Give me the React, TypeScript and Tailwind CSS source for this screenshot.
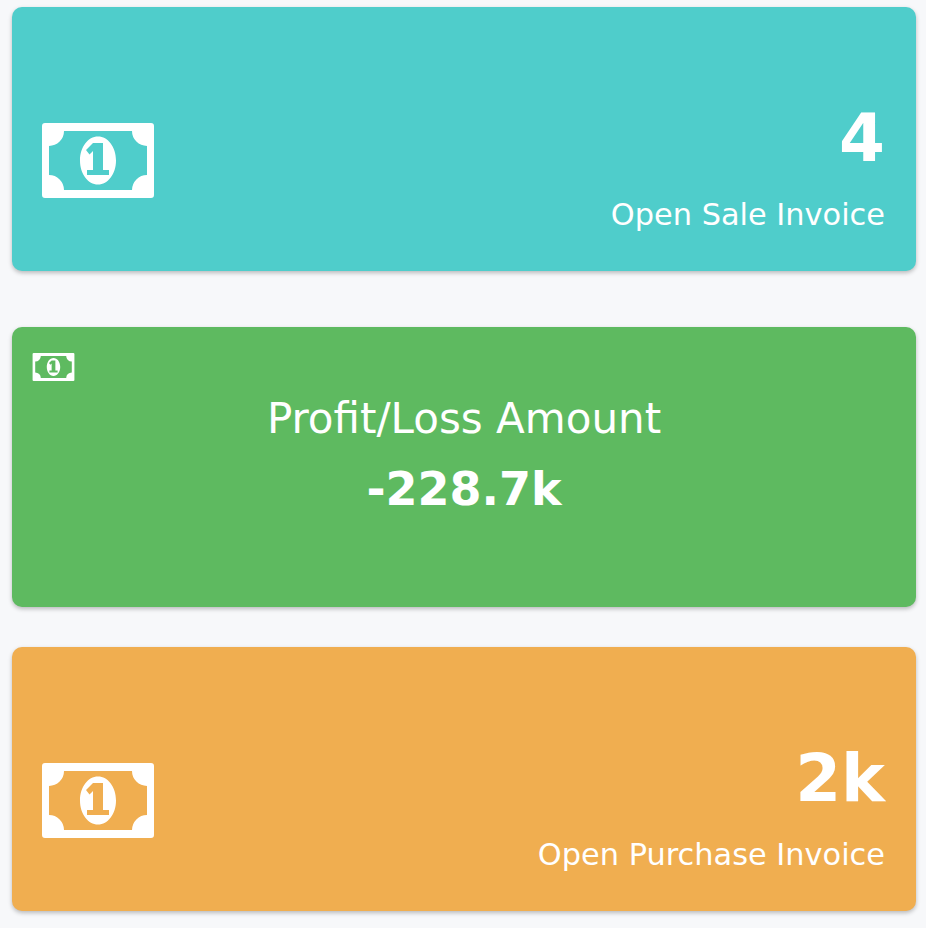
function BillIcon({ className }: { className: string }) {
  return (
    <svg viewBox="0 0 112 75" className={className} aria-hidden="true">
      <path
        fill="#fff"
        fillRule="evenodd"
        d="M3 0H109a3 3 0 0 1 3 3V72a3 3 0 0 1-3 3H3a3 3 0 0 1-3-3V3a3 3 0 0 1 3-3Z
           M22 8A15 15 0 0 1 7 23V52A15 15 0 0 1 22 67H90A15 15 0 0 1 105 52V23A15 15 0 0 1 90 8Z
           M56 13.5C46 13.5 38 24 38 37.5S46 61.5 56 61.5S74 51 74 37.5S66 13.5 56 13.5Z
           M51 20L44 27L47.5 31.5L51 28V47H45V52H67V47H61V20Z"
      />
    </svg>
  );
}

function SideCard({ value, label, color }: { value: string; label: string; color: string }) {
  return (
    <article className={`flex h-[264px] items-end justify-between rounded-[10px] pr-[31px] pl-[30px] pb-[34px] shadow-[0_2px_4px_rgba(0,0,0,0.25)] ${color}`}>
      <BillIcon className="mb-[39px] h-[75px] w-[112px]" />
      <div className="text-right text-white">
        <p className="text-[66px] leading-[72px] font-bold">{value}</p>
        <p className="mt-[18px] text-[30.4px] leading-[44px]">{label}</p>
      </div>
    </article>
  );
}

export default function App() {
  return (
    <main className="flex min-h-[928px] flex-col bg-[#f7f8fa] pr-[10px] pl-[12px] pt-[7px] font-['DejaVu_Sans',sans-serif]">
      <SideCard value="4" label="Open Sale Invoice" color="bg-[#4fcdcb]" />

      <article className="mt-[56px] h-[280px] rounded-[10px] bg-[#5eba60] pt-[26px] pl-[20px] text-white shadow-[0_2px_4px_rgba(0,0,0,0.25)]">
        <BillIcon className="h-[28px] w-[43px]" />
        <div className="-ml-[20px] text-center">
          <p className="mt-[10px] text-[42px] leading-[56px]">Profit/Loss Amount</p>
          <p className="mt-[14px] text-[46px] leading-[56px] font-bold">-228.7k</p>
        </div>
      </article>

      <div className="mt-[40px]">
        <SideCard value="2k" label="Open Purchase Invoice" color="bg-[#f0ae50]" />
      </div>
    </main>
  );
}
